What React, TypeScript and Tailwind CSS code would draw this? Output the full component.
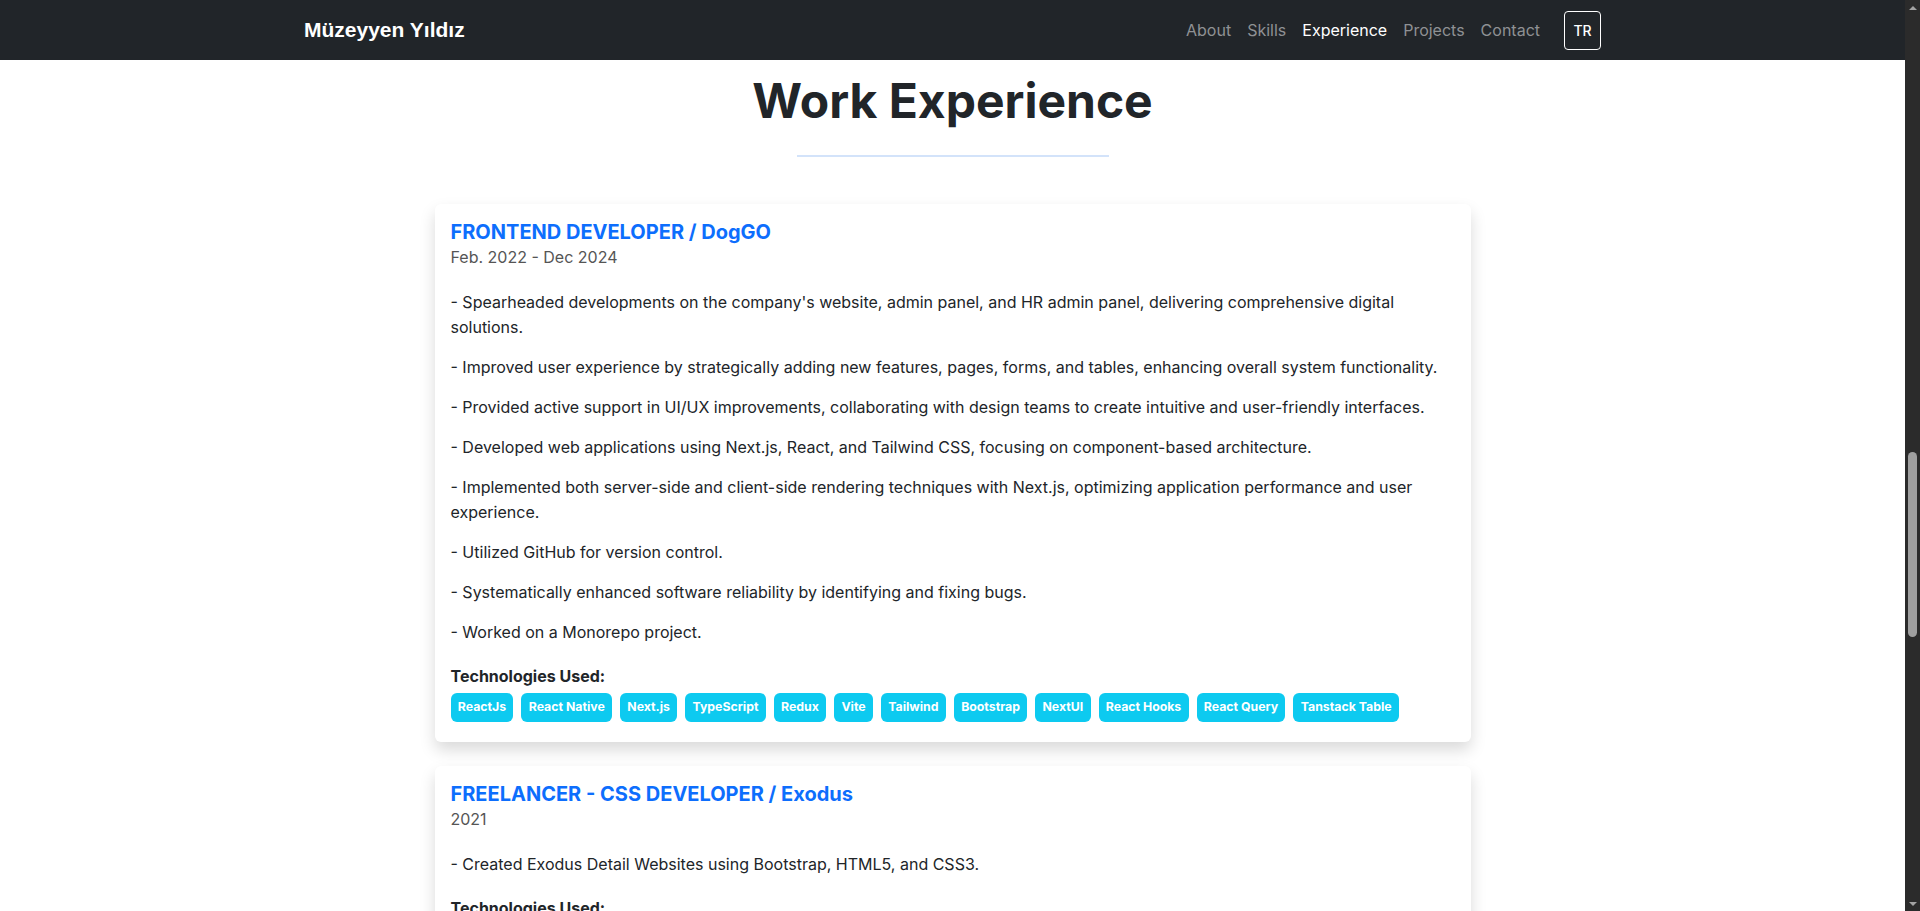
import React from "react";

const inter = { fontFamily: "Inter, 'Noto Sans', sans-serif" };

const jobs = [
  {
    title: "FRONTEND DEVELOPER / DogGO",
    date: "Feb. 2022 - Dec 2024",
    items: [
      "- Spearheaded developments on the company's website, admin panel, and HR admin panel, delivering comprehensive digital solutions.",
      "- Improved user experience by strategically adding new features, pages, forms, and tables, enhancing overall system functionality.",
      "- Provided active support in UI/UX improvements, collaborating with design teams to create intuitive and user-friendly interfaces.",
      "- Developed web applications using Next.js, React, and Tailwind CSS, focusing on component-based architecture.",
      "- Implemented both server-side and client-side rendering techniques with Next.js, optimizing application performance and user experience.",
      "- Utilized GitHub for version control.",
      "- Systematically enhanced software reliability by identifying and fixing bugs.",
      "- Worked on a Monorepo project.",
    ],
    tech: [
      "ReactJs",
      "React Native",
      "Next.js",
      "TypeScript",
      "Redux",
      "Vite",
      "Tailwind",
      "Bootstrap",
      "NextUI",
      "React Hooks",
      "React Query",
      "Tanstack Table",
    ],
  },
  {
    title: "FREELANCER - CSS DEVELOPER / Exodus",
    date: "2021",
    items: ["- Created Exodus Detail Websites using Bootstrap, HTML5, and CSS3."],
    tech: ["Bootstrap", "HTML5", "CSS3"],
  },
];

function Card({ job }: { job: (typeof jobs)[number] }) {
  return (
    <div className="w-[1036px] bg-white rounded-[6px] shadow-[0_8px_16px_rgba(0,0,0,0.15)] px-4 pt-4 pb-[20px] shrink-0">
      <h5 className="text-[20px] leading-[1.2] font-bold text-[#0d6efd]">{job.title}</h5>
      <div className="text-[16px] leading-[24px] text-[#555555] mt-px">{job.date}</div>
      <div className="mt-[21px] flex flex-col gap-[15px]">
        {job.items.map((t, i) => (
          <p key={i} className="text-[16px] leading-[25px] text-[#212529]">
            {t}
          </p>
        ))}
      </div>
      <div className="mt-[19px] text-[16px] leading-[24px] font-bold text-[#212529]">Technologies Used:</div>
      <div className="mt-[5px] flex flex-wrap gap-2">
        {job.tech.map((t) => (
          <span
            key={t}
            className="h-[29px] px-[7.3px] flex items-center rounded-[6px] bg-[#0dcaf0] text-white text-[12.3px] font-bold"
          >
            {t}
          </span>
        ))}
      </div>
    </div>
  );
}

export default function App() {
  return (
    <div className="w-[1920px] h-[911px] overflow-hidden flex bg-white" style={inter}>
      <div className="w-[1905px] h-full flex flex-col">
        <nav className="h-[60px] bg-[#212529] shrink-0 flex items-center pl-[304px] pr-[304px]">
          <div
            className="text-white text-[21px] font-bold"
            style={{ fontFamily: "'Liberation Sans', Arial, sans-serif" }}
          >
            Müzeyyen Yıldız
          </div>
          <div className="ml-auto flex items-center">
            <div className="flex items-center gap-4 text-[16px]">
              <span className="text-[#8f9194]">About</span>
              <span className="text-[#8f9194]">Skills</span>
              <span className="text-white">Experience</span>
              <span className="text-[#8f9194]">Projects</span>
              <span className="text-[#8f9194]">Contact</span>
            </div>
            <div className="ml-6 w-[37px] h-[39px] border border-white rounded-[4px] flex items-center justify-center text-white text-[14px] font-medium">
              TR
            </div>
          </div>
        </nav>
        <div className="flex flex-col items-center">
          <h1 className="mt-[12px] text-[48px] leading-[58px] font-bold text-[#212529]">Work Experience</h1>
          <div className="mt-[25px] w-[312px] h-[2px] bg-[#d3e3fa]" />
          <div className="mt-[47px] flex flex-col gap-6">
            {jobs.map((j) => (
              <Card key={j.title} job={j} />
            ))}
          </div>
        </div>
      </div>
      <div className="w-[15px] h-full bg-[#2b2b2b] flex flex-col items-center shrink-0">
        <div className="h-[15px] flex items-center justify-center">
          <div className="w-0 h-0 border-l-[4px] border-r-[4px] border-b-[4px] border-l-transparent border-r-transparent border-b-[#a3a3a3]" />
        </div>
        <div className="h-[437px]" />
        <div className="w-[9px] h-[185px] rounded-full bg-[#9f9f9f]" />
        <div className="flex-1" />
        <div className="h-[15px] flex items-center justify-center">
          <div className="w-0 h-0 border-l-[4px] border-r-[4px] border-t-[4px] border-l-transparent border-r-transparent border-t-[#a3a3a3]" />
        </div>
      </div>
    </div>
  );
}
